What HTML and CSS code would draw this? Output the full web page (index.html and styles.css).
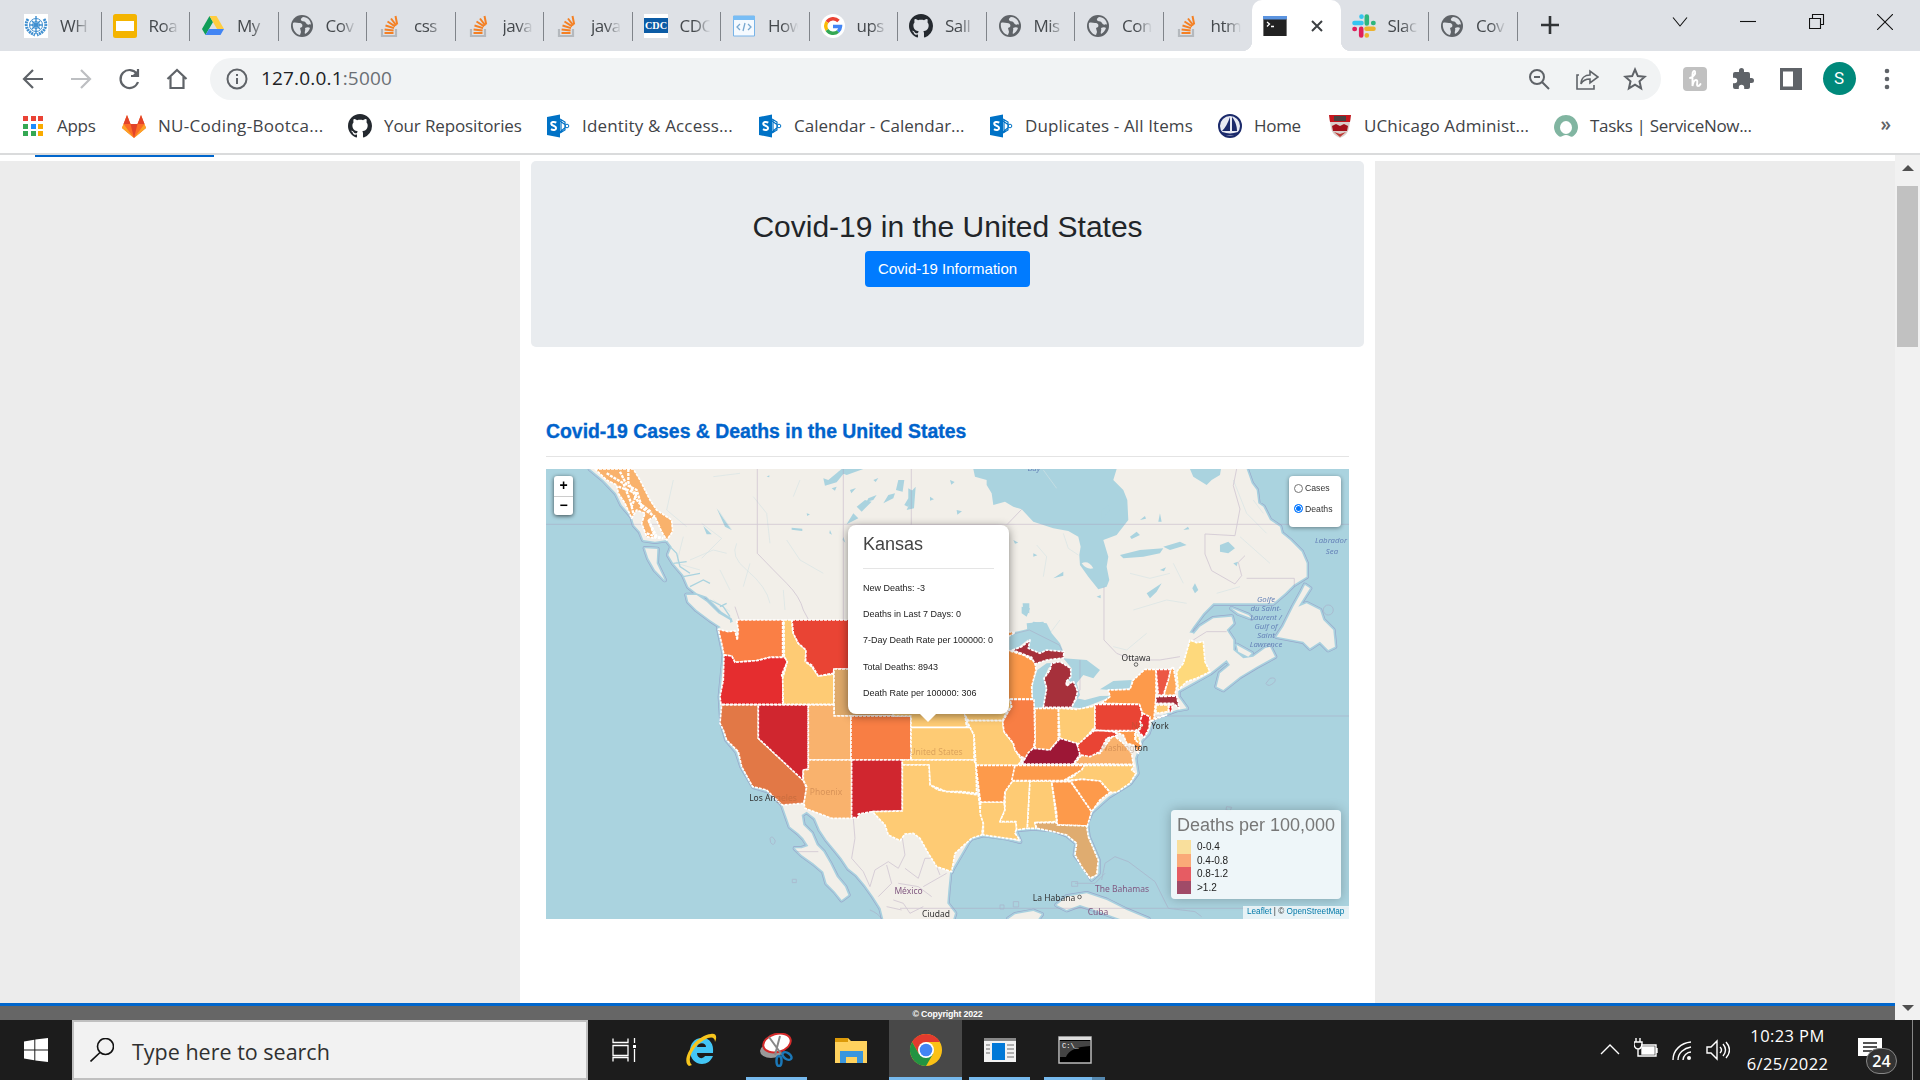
FILE: index.html
```html
<!DOCTYPE html>
<html lang="en">
<head>
<meta charset="utf-8">
<title>Covid-19 in the United States</title>
<link rel="stylesheet" href="styles.css">
</head>
<body>
<svg class="defs" width="0" height="0">
  <symbol id="globe" viewBox="0 0 24 24"><circle cx="12" cy="12" r="11" fill="#5f6368"/><path d="M3 9c2-1 4 0 6 0 3 0 4 2 3 4l-2 1 1 4-1 3C5 20 2 14 3 9zM13 3c-2 1-3 3-1 4s3 0 4 2 3 2 4 1l1 1c0-4-3-8-8-8zM15 14c2-1 4-1 5 0-1 3-3 5-5 6-1-2 1-4 0-6z" fill="#dee1e6"/></symbol>
  <symbol id="stack" viewBox="0 0 24 24"><path d="M4 15v7h14v-7" fill="none" stroke="#b4b8bd" stroke-width="2.2"/><path d="M6.500 19h9M6.600 15.500l9 1M7.500 11.500l8.500 2.600M9.500 7.500l7.600 4.800M13 4.500l5.300 7M17.500 2l1.700 8.500" stroke="#f48024" stroke-width="2"/></symbol>
  <symbol id="github" viewBox="0 0 16 16"><path fill="#24292f" d="M8 0C3.580 0 0 3.580 0 8c0 3.540 2.290 6.530 5.470 7.590.4.070.55-.17.55-.38 0-.19-.01-.82-.01-1.490-2.010.37-2.530-.49-2.690-.94-.09-.23-.48-.94-.82-1.130-.28-.15-.68-.52-.01-.53.63-.01 1.080.58 1.230.82.72 1.210 1.870.87 2.330.66.07-.52.28-.87.51-1.070-1.780-.2-3.640-.89-3.640-3.950 0-.87.31-1.590.82-2.150-.08-.2-.36-1.020.08-2.120 0 0 .67-.21 2.200.82.64-.18 1.320-.27 2-.27s1.360.09 2 .27c1.530-1.040 2.200-.82 2.200-.82.44 1.100.16 1.920.08 2.120.51.56.82 1.270.82 2.150 0 3.070-1.870 3.750-3.650 3.950.29.25.54.73.54 1.480 0 1.070-.01 1.930-.01 2.200 0 .21.15.46.55.38A8.010 8.010 0 0016 8c0-4.420-3.580-8-8-8z"/></symbol>
  <symbol id="sharepoint" viewBox="0 0 24 24"><path d="M14 5l5 3v8l-5 3M14 7l7 5-7 6M15 5v14" fill="none" stroke="#0072c6" stroke-width="1.200"/><circle cx="21" cy="12" r="1.800" fill="#fff" stroke="#0072c6"/><path d="M1 3l13-2.500v23L1 21z" fill="#0072c6"/><path d="M10.300 8.700C8 7.300 5 8 5.300 10c.3 2 4.800 1.600 4.800 4 0 2.200-3 2.600-5.100 1.200" fill="none" stroke="#fff" stroke-width="2"/></symbol>
</svg>

<header class="tabs">
  <div class="tab"><svg class="fav" viewBox="0 0 24 24"><path fill="#fff" d="M0 0h24v24H0z"/><g fill="none" stroke="#3f8fd0"><circle cx="12" cy="11" r="6.500"/><circle cx="12" cy="11" r="3.500"/><path d="M12 2v18M6 11h12M8 7l8 8M16 7l-8 8" stroke-width="1.400"/><path d="M4 5c-4 6-1 13 7 16M20 5c4 6 1 13-7 16" stroke-width="3" stroke-dasharray="2 .7"/></g></svg><span>WH</span></div>
  <div class="tab"><svg class="fav" viewBox="0 0 24 24"><rect width="24" height="24" rx="2.500" fill="#f4b400"/><path fill="#fff" d="M3 7h18v10H3z"/></svg><span>Roa</span></div>
  <div class="tab"><svg class="fav" viewBox="0 0 24 24"><path d="M8.500 2L1 15l3.500 6L12 8z" fill="#0f9d58"/><path d="M8.500 2h7L23 15h-7z" fill="#ffcd40"/><path d="M8 15h15l-3.500 6h-15z" fill="#4285f4"/></svg><span>My</span></div>
  <div class="tab"><svg class="fav"><use href="#globe"/></svg><span>Cov</span></div>
  <div class="tab"><svg class="fav"><use href="#stack"/></svg><span>css</span></div>
  <div class="tab"><svg class="fav"><use href="#stack"/></svg><span>java</span></div>
  <div class="tab"><svg class="fav"><use href="#stack"/></svg><span>java</span></div>
  <div class="tab"><svg class="fav" viewBox="0 0 24 24"><path fill="#fff" d="M0 0h24v24H0z"/><path fill="#0b5ba5" d="M0 4h24v15H0z"/><text x="1" y="14.500" class="cdc" textLength="22" lengthAdjust="spacingAndGlyphs">CDC</text></svg><span>CDC</span></div>
  <div class="tab"><svg class="fav" viewBox="0 0 24 24"><path d="M1.500 2h21v20h-21z" fill="#f5faff" stroke="#78b4e8"/><path d="M1 2h22v4H1z" fill="#78bdf5"/><path d="M8 10l-3 3 3 3M16 10l3 3-3 3M13 9l-2 8" fill="none" stroke="#78a8d0" stroke-width="1.300"/></svg><span>How</span></div>
  <div class="tab"><svg class="fav" viewBox="0 0 24 24"><circle cx="12" cy="12" r="12" fill="#fff"/><g fill="none" stroke-width="3.400"><path d="M17.500 7A7.400 7.400 0 006 8" stroke="#ea4335"/><path d="M6 8a7.400 7.400 0 000 8" stroke="#fbbc05"/><path d="M6 16a7.400 7.400 0 0011 1.500" stroke="#34a853"/><path d="M17 17.500a7.400 7.400 0 002.500-5H12" stroke="#4285f4"/></g></svg><span>ups</span></div>
  <div class="tab"><svg class="fav"><use href="#github"/></svg><span>Sall</span></div>
  <div class="tab"><svg class="fav"><use href="#globe"/></svg><span>Mis</span></div>
  <div class="tab"><svg class="fav"><use href="#globe"/></svg><span>Con</span></div>
  <div class="tab tab-last"><svg class="fav"><use href="#stack"/></svg><span>htm</span></div>
  <div class="tab tab-active"><svg class="fav" viewBox="0 0 24 24"><path fill="#222" d="M0 2h24v20H0z"/><path fill="#5b94e0" d="M0 2h24v3.500H0z"/><path d="M0 5v17M24 5v17" stroke="#777" stroke-width="2"/><path d="M4 8l2.500 2L4 12.500M8 12.500h3" fill="none" stroke="#fff" stroke-width="1.300"/></svg><svg class="close" viewBox="0 0 12 12"><path d="M1 1l10 10M11 1L1 11" stroke="#3c4043" stroke-width="2"/></svg></div>
  <div class="tab"><svg class="fav" viewBox="0 0 24 24"><g stroke-width="4.600" stroke-linecap="round"><path d="M9.500 2.500v.2M2.500 9h7" stroke="#36c5f0"/><path d="M14.800 2.500v7M21.500 9h-.3" stroke="#2eb67d"/><path d="M14.500 14.800h7M14.800 21.500v-.3" stroke="#ecb22e"/><path d="M9.200 14.800v6.700M2.500 15h.3" stroke="#e01e5a"/></g></svg><span>Slac</span></div>
  <div class="tab"><svg class="fav"><use href="#globe"/></svg><span>Cov</span></div>
  <svg class="plus" viewBox="0 0 18 18"><path d="M9 0v18M0 9h18" stroke="#303336" stroke-width="2.600"/></svg>
  <div class="window-controls">
    <svg viewBox="0 0 16 16"><path d="M1 3.500l7 8.500 7-8.500"/></svg>
    <svg viewBox="0 0 16 16"><path d="M0 7.500h16"/></svg>
    <svg viewBox="0 0 16 16"><path d="M.5 4.500h11v10H.5zM3.500 4.500v-4h11v10h-3"/></svg>
    <svg viewBox="0 0 16 16"><path d="M0 0l16 16M16 0L0 16"/></svg>
  </div>
</header>

<nav class="toolbar">
  <div class="nav-icons">
    <svg viewBox="0 0 24 24"><path d="M22 12H3M12 3l-9 9 9 9"/></svg>
    <svg class="muted" viewBox="0 0 24 24"><path d="M2 12h19M12 3l9 9-9 9"/></svg>
    <svg viewBox="0 0 24 24"><path d="M20 7a9 9 0 101 8M21 2v7h-7"/><path d="M21 3v6h-6z" fill="#5f6368" stroke="none"/></svg>
    <svg viewBox="0 0 24 24"><path d="M2.500 12L12 3l9.500 9M5.500 10v11h13V10"/></svg>
  </div>
  <div class="omnibox">
    <svg class="info" viewBox="0 0 24 24"><circle cx="12" cy="12" r="9.500"/><path d="M12 11v6M12 7v2"/></svg>
    <span class="url">127.0.0.1<i>:5000</i></span>
    <svg class="omni-icon" viewBox="0 0 24 24"><circle cx="10" cy="10" r="7"/><path d="M15 15l7 7M7 10h6"/></svg>
    <svg class="omni-icon" viewBox="0 0 24 24"><path d="M4 8H2v14h17v-4M6 17c0-6 4-9 9-9V4l8 6-8 6v-4c-4 0-7 1-9 5z" stroke-width="1.600"/></svg>
    <svg class="omni-icon" viewBox="0 0 24 24"><path d="M12 2.500l2.800 6.600 7 .6-5.300 4.600 1.600 7L12 17.600l-6.100 3.700 1.600-7-5.300-4.600 7-.6z"/></svg>
  </div>
  <div class="extensions">
    <svg viewBox="0 0 24 24"><rect width="24" height="24" rx="4" fill="#c1c1c1"/><path d="M7 11c3-1 6-4 5-6.500-1-1.500-2.500 0-2.500 3V19c.5-3 1.500-6 3.500-6 3 0-.5 6 2 6 1 0 2-1 2.500-2" fill="none" stroke="#fff" stroke-width="1.900" stroke-linecap="round"/></svg>
    <svg viewBox="0 0 24 24"><path fill="#5f6368" d="M20.500 11H19V7a2 2 0 00-2-2h-4V3.500a2.500 2.500 0 00-5 0V5H4a2 2 0 00-2 2v3.800h1.500a2.700 2.700 0 010 5.400H2V20a2 2 0 002 2h3.800v-1.500a2.700 2.700 0 015.400 0V22H17a2 2 0 002-2v-4h1.500a2.500 2.500 0 000-5z"/></svg>
    <svg viewBox="0 0 24 24"><path fill="#5f6368" d="M1 1h22v22H1z"/><path fill="#fff" d="M4 4.500h10v15H4z"/></svg>
    <b class="avatar">S</b>
    <svg viewBox="0 0 24 24"><g fill="#5f6368"><circle cx="12" cy="4" r="2.300"/><circle cx="12" cy="12" r="2.300"/><circle cx="12" cy="20" r="2.300"/></g></svg>
  </div>
</nav>

<nav class="bookmarks">
  <a><svg viewBox="0 0 24 24"><g><path fill="#ea4335" d="M2 2h5v5H2zM10 2h5v5h-5zM17 2h5v5h-5z"/><path fill="#34a853" d="M2 10h5v5H2zM2 17h5v5H2zM10 17h5v5h-5z"/><path fill="#1a8cff" d="M10 10h5v5h-5z"/><path fill="#f9ab00" d="M17 10h5v5h-5zM17 17h5v5h-5z"/></g></svg><span>Apps</span></a>
  <a><svg viewBox="0 0 24 24"><path d="M5 1L0 14l12 10 12-10-5-13-3.500 9h-7z" fill="#fc6d26"/><path d="M5 1l3.500 9H1.500zM19 1l3.500 9h-7z" fill="#e24329"/><path d="M0 14l1.500-4L12 24zM24 14l-1.500-4L12 24z" fill="#fca326"/><path d="M8.500 10h7L12 24z" fill="#e24329"/></svg><span>NU-Coding-Bootca...</span></a>
  <a><svg><use href="#github"/></svg><span>Your Repositories</span></a>
  <a><svg><use href="#sharepoint"/></svg><span>Identity &amp; Access...</span></a>
  <a><svg><use href="#sharepoint"/></svg><span>Calendar - Calendar...</span></a>
  <a><svg><use href="#sharepoint"/></svg><span>Duplicates - All Items</span></a>
  <a><svg viewBox="0 0 24 24"><circle cx="12" cy="12" r="11" fill="#e8eaf3" stroke="#1b2a6b" stroke-width="2"/><path d="M12 3v14H4c3-3 6-8 8-14zM14 3c4 5 5 10 5 14h-5z" fill="#1b2a6b"/><path d="M4 19q8 3 16 0" stroke="#1b2a6b" stroke-width="2" fill="none"/></svg><span>Home</span></a>
  <a><svg viewBox="0 0 24 24"><path d="M1 1h22l-2 13q-1 7-9 10-8-3-9-10z" fill="#d9cfcb"/><path d="M1 1h22l-1 7H2z" fill="#c5161d"/><path d="M6 2h12v5H6z" fill="#4a4040"/><path d="M4 12l4-2 4 2 4-2 4 2-1 5H5z" fill="#a3121b"/><path d="M6 18l6 2 6-2-6 5z" fill="#c03a35"/></svg><span>UChicago Administ...</span></a>
  <a><svg viewBox="0 0 24 24"><path d="M12 1a11.800 11.800 0 00-8 20.500c1.500 1.500 3 1.500 4.500.5 2.500-1.500 4.500-1.500 7 0 1.500 1 3 1 4.500-.5A11.800 11.800 0 0012 1z" fill="#81b5a1"/><ellipse cx="12" cy="13.500" rx="6" ry="6.500" fill="#fff"/></svg><span>Tasks | ServiceNow...</span></a>
  <b class="more">»</b>
</nav>

<div class="viewport">
  <main class="page">
    <div class="topline"><div class="active-link"></div></div>
    <div class="container">
      <section class="jumbotron">
        <h1>Covid-19 in the United States</h1>
        <a class="btn">Covid-19 Information</a>
      </section>
      <section class="content">
        <h2>Covid-19 Cases &amp; Deaths in the United States</h2>
        <div class="map">
          <svg class="tiles" viewBox="546 469 803 450">
            <defs>
              <g id="land">
                <path transform="translate(540 400) scale(.3333)" d="M150 207L190 240 228 280 245 315 275 350 282 375 300 395 310 420 345 425 380 420 395 440 385 465 400 490 430 525 445 560 470 580 500 590 520 610 545 635 575 655 590 700H1500V207ZM315 445L352 447 350 490 374 540 345 510 325 475ZM440 585L470 585 500 605 535 640 570 660 572 685 545 683 510 660 470 630 445 605Z"/>
                <path transform="translate(540 600) scale(.3333)" d="M590 60L535 85 552 165 540 290 545 370 560 420 590 455 605 500 640 560 690 575 727 615 750 680 775 700 790 715 805 738 785 745 765 745 785 765 820 790 850 815 860 850 885 875 905 900 925 885 915 860 890 830 870 790 850 755 830 735 815 700 790 675 785 645 800 635 825 655 840 690 860 720 885 750 905 775 925 805 950 825 975 855 1000 890 1022 925 1030 957H1240L1245 940 1222 910 1225 870 1230 820 1300 700V60Z"/>
                <path transform="translate(900 600) scale(.3333)" d="M100 60L155 815 165 760 215 715 250 705 320 715 360 725 345 690 400 685 460 690 500 705 530 730 525 765 560 810 575 838 595 820 595 780 565 710 560 670 575 635 625 590 690 550 712 520 705 475 725 420 745 400 760 355 830 330 860 325 835 290 835 270 870 240 930 215 880 100 600 40ZM470 915L500 890 560 880 620 900 680 930 745 957H660L600 935 540 915 500 930ZM325 957L345 943 400 933 425 943 415 957Z"/>
                <path transform="translate(840 460) scale(.3333)" d="M0 27H1220L1235 70 1250 90 1255 130 1270 140 1290 180 1320 200 1325 220 1350 240 1385 275 1400 310 1400 350 1360 375 1335 400 1300 430 1240 430 1180 430 1120 430 1090 460 1060 500 1020 560 1030 560 1080 500 1120 475 1175 470 1180 490 1160 510 1180 540 1180 570 1210 595 1240 590 1275 565 1290 560 1305 590 1250 620 1200 650 1150 690 1130 680 1140 640 1170 615 1160 600 1110 640 1020 690 900 700H0ZM1395 375L1410 385 1375 440 1400 430 1440 450 1450 480 1480 510 1485 560 1465 570 1440 545 1410 565 1390 545 1310 530 1330 500 1360 440 1385 395ZM1175 445L1225 465 1235 475 1195 460ZM1190 555L1235 580 1225 590 1195 575Z"/>
              </g>
            </defs>
            <path d="M546 469h803v450H546z" fill="#aad3df"/>
            <use href="#land" class="halo-outer"/><use href="#land" class="halo-inner"/><use href="#land" fill="#f2efe9"/>
            <g transform="translate(840 460) scale(.3333)" class="water">
              <path d="M400 27L405 50 440 60 440 75 455 100 460 135 495 125 520 140 545 148 580 185 640 205 685 213 715 230 722 260 718 285 720 315 745 350 775 388 800 380 808 360 800 320 805 290 790 240 830 225 865 180 862 120 850 90 820 60 830 27Z"/>
              <path d="M1050 27L1060 50 1100 75 1115 60 1140 45 1143 27ZM-5 35L30 27H70L20 45ZM175 70l15-10-5 25zM213 95l14-15-5 65-22 5 13-30zM145 105l20-5-5 15-30 15zM50 140l25-20 20 5-30 30zM840 285l60-15 70-5-10 15-50 10-60 5zM970 260l50-15 20 10-50 15zM870 230l20-15 10 10-25 12zM920 400l45-30-15 25-20 20zM548 430l20 0 0 30-18-5zM1140 255l25-10 20 20-20 15-25-5zM1065 370l10 20-10 10-8-15zM560 490l50-5 15 30-60 20zM640 355l30-20 0 12zM960 160l5 25-10 0zM785 150l20-15 5 15-25 30zM520 240l15 8-10 3zM580 280l12 6-12 4zM900 180l15-12 3 8zM1030 210l14-10 4 8zM770 410l12-5 0 10zM960 330l18-8-6 12zM1180 310l14-5-4 14zM30 90l18-6-14 16zM100 60l15-6-8 12zM270 110l12 8-12 4zM330 60l14 6-10 8zM350 150l16 4-14 10z"/>
              <path class="stream" d="M610 30l40 55M670 220l15 45 30 20M870 340l60 15 60-15M590 255l30 35-10 60M880 450l100-30 60 10M1000 310l30 60M1180 60l40 100 60 60M1200 230l90 80M1130 400l70-20M600 560l60-80M820 560l40 10 60-50M1240 120l30 40"/>
              <path d="M725 310q20-10 35 15-20 5-35-15z" fill="#f2efe9"/>
            </g>
            <g transform="translate(540 400) scale(.3333)" class="water">
              <path d="M850 235l15 5 30-25 10-8h60l-55 15-20 25-35 10zM1075 240l18 0-5 35-20-5zM1105 265l18 10-5 30-15 15-10-5 12-20zM985 295l25-10-10 15-20 5zM755 383l32 3v7l-32-4zM940 340l15 15-35 18zM875 265l15-5-5 12zM530 325l20 30 25 35-20-10zM490 378l25 25-15 0zM680 230l8-4 0 6zM800 340l10 3-8 5zM870 390l6 14-8-4zM910 410l6 18-8-8z"/>
              <path class="stream" d="M535 330l40 60M485 370l60 45-60 60M590 430q-20 40 30 80 60 50 70 100M430 410l-20 80 70 20M520 600l50 35M450 480l70-30 40 10M640 290l40 50 10 90M740 420l40 60 70 40M540 510l30 60M610 560l20-70M400 240l-20 90 60 50M730 570l5 60M780 240l-20 50M520 230l80-10"/>
              <path class="inlet" d="M390 440l20 20 10 40 30 20M400 490l40-5M430 530l50-10M450 560l40-20 20 10M510 600l40 20 20 30M540 620l20-10"/>
            </g>
            <g transform="translate(900 600) scale(.3333)" class="water">
              <path d="M328 100L380 88 400 65 440 70 455 100 480 130 492 160 450 155 420 160 385 145 385 118 345 150 328 150ZM440 190L412 210 398 250 397 297 405 325 430 322 438 265 432 235 445 205 465 188ZM490 175L560 180 600 210 580 235 550 225 530 250 540 285 515 322 545 325 585 310 640 287 600 288 555 300 530 295 530 260 505 240 515 205ZM600 268L640 243 695 240 690 265 630 270ZM365 20l25 5-10 25-15-10z"/>
            </g>
            <g class="borders">
              <path transform="translate(540 400) scale(.3333)" d="M652 207V460Q700 510 740 550 780 590 790 630L805 658M910 207V660M1114 207V375M0 373H2430"/>
              <path transform="translate(840 460) scale(.3333)" d="M545 148L500 195M792 380V540L830 580 880 600 960 600 1020 590M1220 355H1363V380M1190 27l-10 50 20 70-15 80-90-5 0 60 20 50 70 40 20-25-10-40 20-20M1060 540l40-25 60 0"/>
              <path transform="translate(900 600) scale(.3333)" d="M0 348H1347M0 925H1347M328 105l60-15 90 45 12 25M540 180v90l-30 40M460 190v60M1110 235q20-5 15 10-20 20-27 5zM1270 30a10 10 0 1030 0 10 10 0 10-30 0M605 840l10-50 30-20 40 15 80 60 40 80 80 10 20 15M525 850l60 0 30-30M980 620l15 2-5 12-12-5zM515 845h18v14h-18zM340 905h16v16h-16zM300 915h12v12h-12z"/>
              <path transform="translate(540 600) scale(.3333)" d="M940 655l5 60-10 60 35 40 20 45 15-50 40-25 30 20 20-40-10-65M1040 795l15 55-40 40M1095 805l40 30 20-60 25 0 20 50M1075 850l60 10 40 30M1150 860l70-40M1060 900l30 10 20 30 40-20M1040 920l45 10M770 755h65M690 715q8-10 16 8-4 18-14 5zM757 838h12v10h-12zM990 930q25 10 35 27M600 65l-15-45"/>
            </g>
            <g class="states" transform="translate(540 400) scale(.3333)">
              <path fill="#f9b26c" d="M165 207H280L300 240 330 300 350 330 395 360 398 395 380 420 365 395 345 350 325 360 345 415 320 410 305 370 315 340 290 330 275 355 255 310 235 280 230 255 200 240Z"/>
              <path fill="none" class="fjords" d="M200 220l50 30 20 50 10 40M240 215l20 40 30 15 15 50M265 207l0 40 30 60 40 30M290 280l-15 40M235 260l55 20M320 400l40 15M300 320l45 30M325 360l25 50 20 5"/>
            </g>
            <g class="states" transform="translate(540 600) scale(.3333)">
              <path fill="#fa7f45" d="M590 60H728V172H690L650 182 610 185 585 187 575 168 552 165 545 130 535 88 565 95 585 92 592 120 595 90Z"/>
              <path fill="#e52d2f" d="M552 165L575 168 585 187 650 182 690 172H735L742 185 725 225 730 240 728 313H543L540 290 550 240Z"/>
              <path fill="#fecb74" d="M732 60H756L758 95 775 130 798 150 796 185 815 200 835 228 882 222V313H730L728 235 742 185 733 170Z"/>
              <path fill="#e94434" d="M756 60H1100V207H882L880 220 835 228 815 195 797 185 798 150 775 130 760 100Z"/>
              <path fill="#dea96a" d="M882 207H1060V348H882Z"/>
              <path fill="#e27846" d="M545 315H655V415L790 540 800 565 792 610 727 615 700 590 680 570 638 560 605 500 595 455 560 420 550 390 540 370Z"/>
              <path fill="#d0262f" d="M655 315H805V508L790 510 788 540 655 415Z"/>
              <path fill="#f9b26d" d="M805 315H882V348H933V480H805Z"/>
              <path fill="#f9b26d" d="M805 480H935V655H875L795 625 792 610 800 560 790 540V510L805 508Z"/>
              <path fill="#f87e44" d="M933 348H1113V480H933Z"/>
              <path fill="#d0262f" d="M935 480H1087V633L997 635 955 642V653H935Z"/>
            </g>
            <g class="states" transform="translate(900 600) scale(.3333)">
              <g fill="#fecb74">
              <path d="M-20 300H190L195 345 200 382H33V348H-20ZM33 382H210L222 405V480H33Z"/>
              <path d="M7 480H222L228 495 230 580 185 575 140 575 90 555 87 495H7Z"/>
              <path d="M7 495H87L90 555 115 570 140 575 185 578 235 585 240 625 250 670 245 705 215 715 165 760 155 815 110 800 85 760 60 715 40 700 15 702 0 722-35 705-45 675-83 635 7 633Z"/>
              <path d="M190 300H330L335 320 320 335 308 362H205L195 345Z"/>
              <path d="M200 362H308L312 395 340 430 345 450 365 480 355 495 345 515H335V496H228L222 405Z"/>
              <path d="M242 606H312L315 630 300 665H348L350 685 345 700 360 720 320 715 250 705 250 670 240 640Z"/>
              <path d="M335 543H390L382 685 350 690 348 665H300L315 630 315 575Z"/>
              <path d="M390 543H455L470 665 405 668 408 685H382Z"/>
              <path d="M475 325L530 328 585 318V380L560 410 540 432 505 425 480 415Z"/>
              <path d="M488 542L520 530 553 496H703L695 510 708 520 690 550 650 577H630L600 543 545 538Z"/>
              <path d="M768 315H805V335L768 340Z"/><path d="M705 392L718 415 722 432H710Z"/>
              </g>
              <g fill="#fd9a4b">
              <path d="M228 496H345L340 540 315 575 312 606H242L238 580Z"/>
              <path d="M320 150L370 165 405 185 408 210 395 260 397 297H320ZM300 92L345 98 328 108 300 120Z"/>
              <path d="M345 496H553L545 510 490 542H335Z"/>
              <path d="M455 545H512L575 635 562 678 472 675 470 640Z"/>
              <path d="M512 543L545 538 600 543 630 577 600 600 575 635Z"/>
              <path d="M605 310L630 290 625 270 690 268 700 240 735 208H768V290L762 355 800 345 755 362 728 340 718 313Z"/>
              <path d="M640 395L705 392 705 420 725 435 715 460 700 435 680 430 670 405Z"/>
              </g>
              <path fill="#fda758" d="M405 325H475V420L450 450 405 460V420ZM812 208L820 200 830 260 825 285 792 287 803 240Z"/>
              <path fill="#f87e44" d="M330 298H402L405 420 400 445 378 475 362 470 345 450 340 430 312 395 308 365 325 335 335 320Z"/>
              <path fill="#a6303b" d="M430 322L440 265 432 235 450 210 455 190 480 185 512 205 513 230 498 245 500 258 520 243 533 275 527 295 515 322ZM337 150L365 140 390 120 385 145 420 160 440 150 492 155 490 174 440 180 405 192 395 172ZM768 290L830 288 838 325 820 310H768Z"/>
              <path fill="#9d1736" d="M366 492L385 458 400 445 450 450 480 415 530 430 542 460 520 492Z"/>
              <path fill="#dfac70" d="M405 668H470L472 675 560 678 565 710 595 780 590 825 570 835 545 800 525 765 530 730 500 705 460 695 435 690 410 685Z"/>
              <path fill="#f9b26d" d="M523 492L545 465 600 460 640 405 670 430 695 460 700 493Z"/>
              <path fill="#e94434" d="M532 435L560 410 585 390 640 395 655 405 620 415 600 455 570 470 540 465ZM585 313H718L728 345 720 385 705 392H585Z"/>
              <path fill="#e52d2f" d="M728 340L750 350 747 385 733 412 715 395 727 375 720 365ZM807 315H817L815 335H807Z"/>
              <path fill="#ec5744" d="M768 208H812L805 240 790 285H775Z"/>
              <path fill="#fed97c" d="M830 215L850 190 870 120 890 128 910 125 915 185 930 215 890 235 860 245 835 270Z"/>
            </g>
            <g class="labels" text-anchor="middle">
              <text x="1136" y="660.500">Ottawa</text><circle cx="1136" cy="664.500" r="1.800"/>
              <text x="773" y="801">Los An<tspan class="faint">geles</tspan></text>
              <text x="826" y="795" class="faint">Phoenix</text><text x="936" y="754.500" class="faint">United States</text>
              <text x="1150" y="729"><tspan class="faint">New</tspan> York</text><text x="1124" y="751"><tspan class="faint">Washing</tspan>ton</text>
              <text x="1054" y="901">La Habana</text><circle cx="1079.500" cy="897" r="1.800"/><text x="936" y="917">Ciudad</text>
              <g class="country"><text x="908.500" y="894">México</text><text x="1122" y="891.500">The Bahamas</text><text x="1098" y="915">Cuba</text></g>
              <g class="sea"><text x="1331" y="543">Labrador</text><text x="1332" y="554">Sea</text><text x="1034" y="470.500">Bay</text><text x="1266" y="602">Golfe</text><text x="1266" y="611">du Saint-</text><text x="1266" y="620">Laurent /</text><text x="1266" y="629">Gulf of</text><text x="1266" y="638">Saint</text><text x="1266" y="647">Lawrence</text></g>
            </g>
          </svg>
          <div class="zoom"><b>+</b><b>−</b></div>
          <div class="layers"><label><i></i>Cases</label><label><i class="on"></i>Deaths</label></div>
          <div class="popup">
            <h3>Kansas</h3>
            <p>New Deaths: -3</p><p>Deaths in Last 7 Days: 0</p><p>7-Day Death Rate per 100000: 0</p><p>Total Deaths: 8943</p><p>Death Rate per 100000: 306</p>
          </div>
          <div class="legend">
            <h4>Deaths per 100,000</h4>
            <div><i class="c1"></i>0-0.4</div><div><i class="c2"></i>0.4-0.8</div><div><i class="c3"></i>0.8-1.2</div><div><i class="c4"></i>&gt;1.2</div>
          </div>
          <div class="credit"><a>Leaflet</a> | © <a>OpenStreetMap</a></div>
        </div>
      </section>
    </div>
    <footer>© Copyright 2022</footer>
  </main>
  <aside class="scrollbar"><i class="up"></i><i class="thumb"></i><i class="down"></i></aside>
</div>

<div class="taskbar">
  <div class="start"><svg viewBox="0 0 24 24"><path fill="#fff" d="M0 3.500l10.300-1.700v9.700H0zM11.300 1.600L24 0v11.500H11.300zM0 12.500h10.300v9.700L0 20.500zM11.300 12.500H24V24l-12.700-1.600z"/></svg></div>
  <div class="search"><svg viewBox="0 0 24 24"><circle cx="15.500" cy="8.500" r="8"/><path d="M10 14.500L.5 23.500"/></svg><span>Type here to search</span></div>
  <div class="app"><svg viewBox="0 0 24 24"><path d="M1 .5v4h15v-4M1 7.500h15v10H1zM1 23.500v-4h15v4M22.500 0v5M22.500 11v13" fill="none" stroke="#fff" stroke-width="1.300"/><path d="M21 7h3v3h-3z" fill="#fff"/></svg></div>
  <div class="app"><svg class="big" viewBox="0 0 34 34"><path d="M7 20h22c1-9-3-15-11-15S6 11 6 18s5 13 12 13c5 0 9-3 11-8h-8c-3 4-8 2-8-3M13 14c1-5 9-5 9 0z" fill="#43c6f5" fill-rule="evenodd"/><path d="M5 33C-4 28 11 2 27 1c6-1 6 4 4 8 0-5-4-6-11-2C9 13 2 27 8 32z" fill="#f7c51d"/></svg></div>
  <div class="app running"><svg class="big" viewBox="0 0 34 34"><ellipse cx="12" cy="18" rx="11" ry="7" fill="#999"/><ellipse cx="18" cy="10" rx="14" ry="9" fill="#fff" stroke="#d42b2b" stroke-width="2" transform="rotate(-15 18 10)"/><path d="M10 4l13 18M21 3l-5 19" stroke="#888" stroke-width="2"/><g fill="none" stroke="#1b78b8" stroke-width="2.500"><ellipse cx="20" cy="28" rx="2.500" ry="5"/><ellipse cx="28" cy="23" rx="5" ry="3" transform="rotate(35 28 23)"/></g></svg></div>
  <div class="app"><svg class="big" viewBox="0 0 34 34"><path d="M1 5h13l3 3h16v22H1z" fill="#ffd25e"/><path d="M1 5h13v4H1z" fill="#dc9a08"/><path d="M6 30V18h23v12h-6v-6H12v6z" fill="#3a96dd"/></svg></div>
  <div class="app current"><svg class="big" viewBox="0 0 34 34"><circle cx="17" cy="17" r="16" fill="#fbc116"/><path d="M3.100 9A16 16 0 0130.900 9H17L10 21z" fill="#e33b2e"/><path d="M3.100 9A16 16 0 0017 33l7-12-14 0z" fill="#229342"/><circle cx="17" cy="17" r="8" fill="#fff"/><circle cx="17" cy="17" r="6.300" fill="#4285f4"/></svg></div>
  <div class="app running"><svg class="big" viewBox="0 0 34 34"><path d="M1 5h32v24H1z" fill="#f2f2f2"/><path d="M1 5h32v3H1z" fill="#888"/><path d="M9 10h13v17H9z" fill="#0078d7"/><path d="M3 12h4m-4 4h4m-4 4h4M24 12h7m-7 4h7m-7 4h7m-7 4h7" stroke="#999" stroke-width="1.500"/></svg></div>
  <div class="app running stacked"><svg class="big" viewBox="0 0 34 34"><path d="M1 4h32v26H1z" fill="#000" stroke="#bbb" stroke-width="1.500"/><path d="M1 4h32v3H1z" fill="#ddd"/><path d="M2 8h30v5Q12 14 8 24H2z" fill="#444"/><text x="4" y="15" class="cmd">C:\_</text></svg></div>
  <div class="tray">
    <svg viewBox="0 0 24 24"><path d="M3 16l9-9 9 9"/></svg>
    <svg viewBox="0 0 24 24"><path d="M7 7h15v11H4V13M23 10v5M2 0v4M6 0v4M0 4h8v3q-1 4-4 4t-4-4zM4 11v3"/><path d="M8 9h12v7H8z" fill="#fff"/></svg>
    <svg viewBox="0 0 24 24"><path d="M3 22C3 12 11 5 21 4M8 22C8 15 14 10 21 9M13 22c0-4 4-8 8-8"/><circle cx="19" cy="20" r="2" fill="#fff" stroke="none"/></svg>
    <svg viewBox="0 0 24 24"><path d="M1 9h4l6-6v18l-6-6H1zM14 9q3 3 0 6M17 6q5 6 0 12M20 4q7 8 0 16"/></svg>
  </div>
  <div class="clock"><span>10:23 PM</span><span>6/25/2022</span></div>
  <div class="notify"><svg viewBox="0 0 24 24"><path fill="#fff" d="M0 0h24v18h-8l-5 5v-5H0z"/><path d="M5 5h14M5 9h14M5 13h9" stroke="#1c1c1c" stroke-width="1.500"/></svg><b>24</b></div>
</div>
</body>
</html>
```
FILE: styles.css
```css
* { box-sizing: border-box; }
body { margin: 0; width: 1920px; height: 1080px; overflow: hidden; display: flex; flex-direction: column; font-family: "Liberation Sans", Arial, sans-serif; background: #fff; }
h1, h2, h3, h4, p { margin: 0; font-weight: 400; }
svg { flex: none; display: block; }
.defs { position: absolute; }

.tabs, .toolbar, .bookmarks, .taskbar { font-family: "Open Sans", "Noto Sans", sans-serif; flex: none; }
.tabs { height: 51px; background: #dee1e6; display: flex; align-items: flex-start; padding-left: 13px; }
.tab { width: 88.5px; height: 51px; flex: none; display: flex; align-items: center; padding-left: 11px; position: relative; }
.tab::after { content: ""; position: absolute; right: 0; top: 12px; width: 1px; height: 29px; background: #80848a; }
.tab-last::after, .tab-active::after { display: none; }
.fav { width: 24px; height: 24px; }
.tab span { margin-left: 12px; width: 38px; white-space: nowrap; font-size: 17px; letter-spacing: -.5px; color: #45494d; -webkit-mask-image: linear-gradient(90deg, #000 38%, transparent 80%); mask-image: linear-gradient(90deg, #000 38%, transparent 80%); }
.tab-active { background: #fff; border-radius: 10px 10px 0 0; }
.tab-active::before { content: ""; position: absolute; left: -10px; right: -10px; bottom: 0; height: 10px; background: radial-gradient(circle at 0 0, transparent 10px, #fff 10.5px) left / 10px 10px no-repeat, radial-gradient(circle at 100% 0, transparent 10px, #fff 10.5px) right / 10px 10px no-repeat; }
.tab-active .close { width: 12px; height: 12px; margin-left: 24px; }
.plus { width: 18px; height: 18px; margin: 16px 0 0 23px; }
.window-controls { display: flex; gap: 52.5px; margin: 14px 0 0 auto; padding-right: 27px; }
.window-controls svg { width: 16px; height: 16px; fill: none; stroke: #111; stroke-width: 1.1; }

.toolbar { height: 55px; display: flex; align-items: center; padding: 0 21px; }
.nav-icons { display: flex; gap: 24px; width: 189px; flex: none; }
.nav-icons svg { width: 24px; height: 24px; fill: none; stroke: #5f6368; stroke-width: 2.2; }
.nav-icons .muted { stroke: #bdbfc2; }
.omnibox { width: 1451px; height: 42px; border-radius: 21px; background: #f1f3f4; display: flex; align-items: center; padding: 0 14px 0 15px; }
.info { width: 24px; height: 24px; fill: none; stroke: #5f6368; stroke-width: 2; }
.url { font-size: 19px; letter-spacing: .17px; color: #202124; margin: -2px auto 0 12px; }
.url i { font-style: normal; color: #6b6f74; }
.omni-icon { width: 24px; height: 24px; margin-left: 24px; fill: none; stroke: #5f6368; stroke-width: 2; }
.extensions { display: flex; align-items: center; gap: 24px; padding-left: 22px; }
.extensions svg { width: 24px; height: 24px; flex: none; }
.avatar { width: 33px; height: 33px; margin: 0 -4.500px; flex: none; border-radius: 50%; background: #00897b; color: #fff; font: 17px/33px Roboto, sans-serif; text-align: center; }

.bookmarks { height: 49px; border-bottom: 2px solid #dadbdc; padding: 0 0 8px 21px; display: flex; align-items: center; }
.bookmarks a { display: flex; align-items: center; gap: 12px; flex: none; white-space: nowrap; font-size: 17px; letter-spacing: -.3px; color: #3f4347; }
.bookmarks a svg { width: 24px; height: 24px; }
.bookmarks a:nth-child(1) { width: 101px; }
.bookmarks a:nth-child(2) { width: 226px; letter-spacing: .3px; }
.bookmarks a:nth-child(3) { width: 198px; letter-spacing: -.12px; }
.bookmarks a:nth-child(4) { width: 212px; letter-spacing: .17px; }
.bookmarks a:nth-child(5) { width: 231px; letter-spacing: .02px; }
.bookmarks a:nth-child(6) { width: 229px; letter-spacing: .12px; }
.bookmarks a:nth-child(7) { width: 110px; }
.bookmarks a:nth-child(8) { width: 226px; letter-spacing: .12px; }
.more { margin: -4px 29px 0 auto; font-size: 19px; font-weight: 600; color: #5f6368; }
.cdc { font: bold 10px "Liberation Serif", serif; fill: #fff; }

.viewport { height: 865px; flex: none; display: flex; }
.page { width: 1895px; background: #ececec; display: flex; flex-direction: column; }
.topline { height: 6px; background: #fff; padding-left: 35px; }
.active-link { width: 179px; height: 2px; background: #0066cc; }
.container { width: 855px; height: 842px; margin-left: 520px; background: #fff; padding: 0 11px; }
.jumbotron { height: 186px; border-radius: 5px; background: #e9ecef; display: flex; flex-direction: column; align-items: center; padding-top: 48px; }
.jumbotron h1 { font-size: 30px; line-height: 36px; color: #212529; margin-bottom: 6px; }
.btn { width: 165px; height: 36px; border-radius: 4px; background: #007bff; color: #fff; font-size: 15px; line-height: 36px; text-align: center; }
.content { padding: 69px 15px 0; }
.content h2 { height: 41px; border-bottom: 1px solid #e4e4e4; font: bold 19.400px/30px "Liberation Sans", sans-serif; color: #0063cc; -webkit-text-stroke: .35px #0063cc; white-space: nowrap; margin-bottom: 12px; }
footer { height: 17px; border-top: 3px solid #0066cc; background: #666; color: #fff; font-size: 8.800px; font-weight: bold; line-height: 16px; text-align: center; letter-spacing: -.15px; }
.scrollbar { width: 25px; background: #f1f1f1; display: flex; flex-direction: column; align-items: center; }
.scrollbar .up { border: 6px solid transparent; border-top: 0; border-bottom: 6px solid #505050; margin: 10px 0 15px; }
.scrollbar .thumb { width: 21px; height: 161px; background: #c1c1c1; }
.scrollbar .down { border: 6px solid transparent; border-bottom: 0; border-top: 6px solid #505050; margin: auto 0 9px; }

.map { position: relative; width: 803px; height: 450px; overflow: hidden; }
.tiles { width: 803px; height: 450px; }
.halo-outer { fill: none; stroke: #98a8cb; stroke-width: 14; stroke-linejoin: round; }
.halo-inner { fill: none; stroke: #a9d1df; stroke-width: 10; stroke-linejoin: round; }
.water { fill: #aad3df; }
.stream { fill: none; stroke: #d3e3e4; stroke-width: 1.8; }
.inlet { fill: none; stroke: #aad3df; stroke-width: 4; }
.borders { fill: none; stroke: #aa96b8; stroke-width: 2.500; opacity: .45; }
.states { stroke: #fff; stroke-width: 5; stroke-dasharray: 9 3; stroke-linejoin: round; }
.fjords { stroke-width: 7; }
.labels { font-family: "Noto Sans", sans-serif; font-size: 8.500px; fill: #333; }
.labels circle { fill: none; stroke: #444; stroke-width: .8; }
.labels .faint { fill: #9a5a30; fill-opacity: .35; }
.country { fill: #805880; }
.sea { fill: #6683b8; font-size: 7.800px; font-style: italic; }
.zoom { position: absolute; left: 8px; top: 7px; width: 19px; height: 39px; background: #fff; border-radius: 3px; box-shadow: 0 1px 4px rgba(0, 0, 0, .65); display: flex; flex-direction: column; }
.zoom b { height: 19.500px; font-size: 14px; line-height: 19px; text-align: center; }
.zoom b + b { border-top: 1px solid #ccc; line-height: 17px; }
.layers { position: absolute; right: 8px; top: 7px; width: 52px; height: 51px; background: #fff; border-radius: 4px; box-shadow: 0 1px 4px rgba(0, 0, 0, .4); padding: 2px 0 0 5px; font-size: 8.700px; color: #333; }
.layers label { display: flex; align-items: center; gap: 2px; height: 20.500px; }
.layers i { width: 9px; height: 9px; border: 1px solid #767676; border-radius: 50%; }
.layers .on { border-color: #0075ff; background: #0075ff; box-shadow: inset 0 0 0 1px #fff; }
.popup { position: absolute; left: 302px; top: 56px; width: 161px; height: 189px; background: #fff; border-radius: 8px; box-shadow: 0 2px 10px rgba(0, 0, 0, .45); padding: 9px 15px; font-size: 9px; color: #222; }
.popup::after { content: ""; position: absolute; left: 72px; bottom: -8px; border: 8px solid transparent; border-bottom: 0; border-top-color: #fff; }
.popup h3 { height: 35px; font-size: 18px; line-height: 21px; color: #444; border-bottom: 1px solid #e5e5e5; margin-bottom: 6px; }
.popup p { height: 26.200px; line-height: 27px; white-space: nowrap; }
.legend { position: absolute; right: 8px; bottom: 20px; width: 170px; height: 89px; padding: 5px 6px; border-radius: 4px; background: rgba(255, 255, 255, .8); box-shadow: 0 0 12px rgba(0, 0, 0, .25); font-size: 10px; color: #222; }
.legend h4 { font-size: 18px; line-height: 21px; color: #777; white-space: nowrap; margin-bottom: 4px; }
.legend div { height: 13.500px; display: flex; align-items: center; gap: 6px; }
.legend i { width: 14px; height: 13.500px; }
.c1 { background: #f9df9c; } .c2 { background: #faaa78; } .c3 { background: #e65c63; } .c4 { background: #a04b68; }
.credit { position: absolute; right: 0; bottom: 0; width: 106px; height: 13px; padding-left: 4px; background: rgba(255, 255, 255, .7); font-size: 8.200px; line-height: 12px; color: #333; white-space: nowrap; }
.credit a { color: #0078a8; }

.taskbar { height: 60px; background: #1c1c1c; display: flex; align-items: center; color: #fff; }
.start { width: 72px; padding-left: 24px; }
.start svg { width: 24px; height: 24px; }
.search { width: 516px; height: 60px; background: #f2f2f2; border: 2px solid #c0c0c0; display: flex; align-items: center; padding-left: 16px; }
.search svg { width: 24px; height: 24px; fill: none; stroke: #111; stroke-width: 1.600; }
.search span { font-size: 21.500px; letter-spacing: 0; color: #303030; margin: 3px 0 0 18px; }
.app { width: 75.500px; height: 60px; display: flex; align-items: center; justify-content: center; position: relative; }
.app svg { width: 24px; height: 24px; }
.app svg.big { width: 34px; height: 34px; }
.app:nth-child(3) { width: 75px; padding-right: 3px; }
.running { box-shadow: inset 0 -3px #76b9ed; width: 61px; margin: 0 7px; }
.current { width: 73px; background: #484848; box-shadow: inset 0 -3px #76b9ed; }
.stacked::after { content: ""; position: absolute; right: 0; bottom: 0; width: 13px; height: 3px; background: #5588af; }
.cmd { font: 7px "Liberation Mono", monospace; fill: #fff; }
.tray { display: flex; gap: 12px; margin-left: auto; }
.tray svg { width: 24px; height: 24px; fill: none; stroke: #fff; stroke-width: 1.400; }
.clock { width: 115px; display: flex; flex-direction: column; align-items: center; font-size: 16.500px; line-height: 28px; letter-spacing: .4px; }
.notify { width: 68px; height: 60px; padding: 18px 0 0 13px; position: relative; border-right: 1px solid #888; margin-right: 7px; }
.notify svg { width: 24px; height: 24px; }
.notify b { position: absolute; left: 21px; top: 28px; width: 31px; height: 26px; border: 1px solid #888; border-radius: 13px; background: #333; font-size: 16px; font-weight: 600; line-height: 24px; text-align: center; }
```
